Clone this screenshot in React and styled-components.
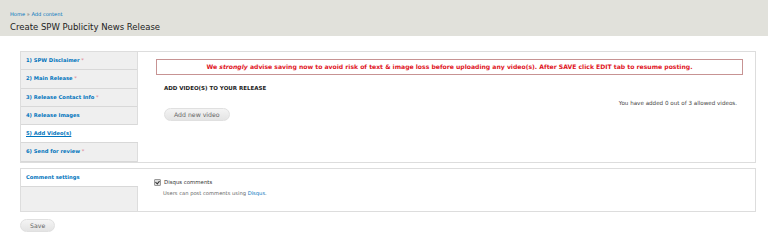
import React from "react";
import styled, { createGlobalStyle } from "styled-components";

const GlobalStyle = createGlobalStyle`
  html, body {
    margin: 0;
    padding: 0;
    background: #fff;
    font-family: "DejaVu Sans", Verdana, sans-serif;
  }
`;

const tabs = [
  { label: "1) SPW Disclaimer", required: true },
  { label: "2) Main Release", required: true },
  { label: "3) Release Contact Info", required: true },
  { label: "4) Release Images" },
  { label: "5) Add Video(s)", active: true },
  { label: "6) Send for review", required: true },
];

const App = () => {
  return (
    <Page>
      <GlobalStyle />
      <Header>
        <Breadcrumb>
          <a href="#">Home</a> » <a href="#">Add content</a>
        </Breadcrumb>
        <Title>Create SPW Publicity News Release</Title>
      </Header>
      <Content>
        <VerticalTabs>
          <TabList>
            {tabs.map((t) => (
              <Tab key={t.label} $active={t.active}>
                <TabLink $active={t.active}>{t.label}</TabLink>
                {t.required && <Required> *</Required>}
              </Tab>
            ))}
          </TabList>
          <Pane>
            <Warning>
              We <em>strongly</em> advise saving now to avoid risk of text &amp; image loss before uploading any
              video(s). After SAVE click EDIT tab to resume posting.
            </Warning>
            <Fieldset>
              <Legend>ADD VIDEO(S) TO YOUR RELEASE</Legend>
              <Count>You have added 0 out of 3 allowed videos.</Count>
              <Button>Add new video</Button>
            </Fieldset>
          </Pane>
        </VerticalTabs>
        <VerticalTabs>
          <TabList>
            <Tab $active>
              <TabLink>Comment settings</TabLink>
            </Tab>
          </TabList>
          <Pane $tight>
            <CheckRow>
              <Check />
              <span>Disqus comments</span>
            </CheckRow>
            <Description>
              Users can post comments using <a href="#">Disqus</a>.
            </Description>
          </Pane>
        </VerticalTabs>
        <Actions>
          <Button>Save</Button>
        </Actions>
      </Content>
    </Page>
  );
};

export default App;

const Page = styled.div`
  width: 768px;
  height: 249px;
  overflow: hidden;
`;

const Header = styled.div`
  background: #e1e1db;
  height: 36px;
  padding: 11px 10px 0;
  box-sizing: border-box;
`;

const Breadcrumb = styled.div`
  font-size: 5.1px;
  line-height: 7px;
  color: #555;
  a {
    color: #0074bd;
    text-decoration: none;
  }
`;

const Title = styled.h1`
  margin: 3px 0 0;
  font-size: 8.5px;
  line-height: 12px;
  font-weight: normal;
  color: #222;
`;

const Content = styled.div`
  padding: 15px 12px 0 20px;
`;

const VerticalTabs = styled.div`
  display: flex;
  border: 1px solid #ddd;
  background: #fff;
  margin-bottom: 5px;
`;

const TabList = styled.div`
  width: 116px;
  flex-shrink: 0;
  background: #efefef;
  border-right: 1px solid #ddd;
`;

const Tab = styled.div`
  height: 18.3px;
  box-sizing: border-box;
  padding: 5px 0 0 5px;
  border-bottom: 1px solid #d8d8d8;
  background: ${(p) => (p.$active ? "#fff" : "#efefef")};
  margin-right: ${(p) => (p.$active ? "-1px" : "0")};
  font-size: 5.2px;
  line-height: 7px;
  font-weight: bold;
  white-space: nowrap;
`;

const TabLink = styled.a`
  color: #0074bd;
  text-decoration: ${(p) => (p.$active ? "underline" : "none")};
`;

const Required = styled.span`
  color: #e0788a;
  font-weight: normal;
`;

const Pane = styled.div`
  flex: 1;
  padding: ${(p) => (p.$tight ? "10px 0 14px 16px" : "7px 12px 30px 18px")};
`;

const Warning = styled.div`
  border: 1px solid #c79393;
  height: 16px;
  box-sizing: border-box;
  text-align: center;
  color: #e0141e;
  font-weight: bold;
  font-size: 6.1px;
  line-height: 14px;
  white-space: nowrap;
  em {
    font-style: italic;
  }
`;

const Fieldset = styled.div`
  padding: 10px 0 0 8px;
  display: flex;
  flex-direction: column;
  align-items: flex-start;
`;

const Legend = styled.div`
  font-size: 5.5px;
  font-weight: bold;
  color: #222;
  line-height: 7px;
`;

const Count = styled.div`
  align-self: stretch;
  text-align: right;
  font-size: 5.6px;
  line-height: 7px;
  color: #444;
  margin: 8px 6px 0 0;
`;

const Button = styled.button`
  font-family: "DejaVu Sans", Verdana, sans-serif;
  font-size: 6.2px;
  color: #666;
  height: 13px;
  padding: 0 9px;
  margin-top: 1px;
  border: 1px solid #e0e0e0;
  border-radius: 7px;
  background: linear-gradient(#f4f4f4, #e4e4e4);
  line-height: 11px;
`;

const CheckRow = styled.div`
  display: flex;
  align-items: center;
  gap: 3px;
  font-size: 5.4px;
  line-height: 7px;
  color: #333;
`;

const Check = styled.span`
  width: 5px;
  height: 5px;
  border: 1px solid #999;
  border-radius: 1px;
  background: #ddd;
  position: relative;
  &::after {
    content: "";
    position: absolute;
    left: 1px;
    top: 0;
    width: 2px;
    height: 3px;
    border: solid #333;
    border-width: 0 1px 1px 0;
    transform: rotate(40deg);
  }
`;

const Description = styled.div`
  font-size: 5.2px;
  line-height: 7px;
  color: #666;
  margin: 4px 0 0 9px;
  a {
    color: #0074bd;
    text-decoration: none;
  }
`;

const Actions = styled.div`
  display: flex;
  padding-top: 1px;
`;
